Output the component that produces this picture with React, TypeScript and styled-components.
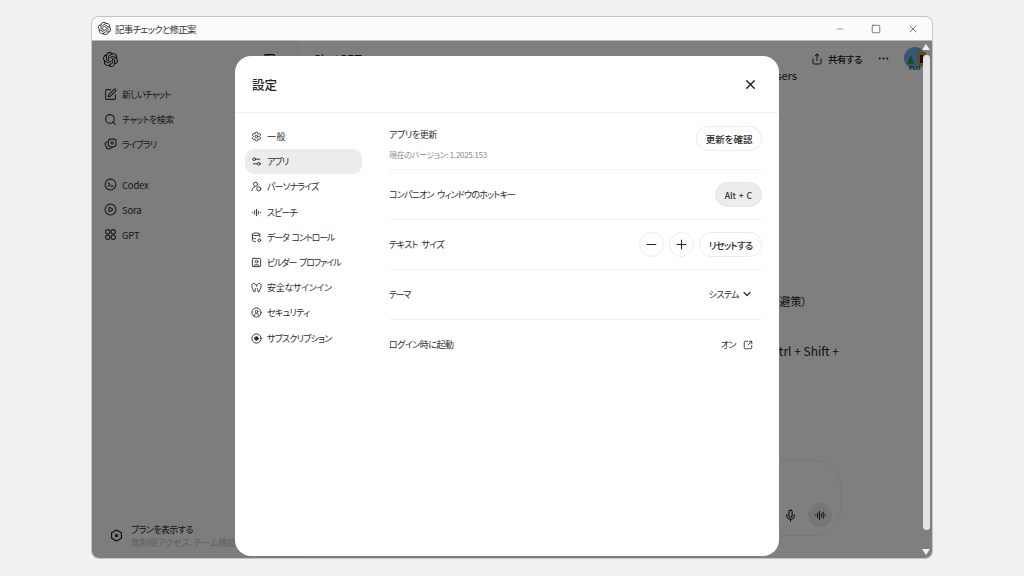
import React from 'react'
import styled, { createGlobalStyle } from 'styled-components'
import {
  AudioLines,
  ChevronDown,
  CirclePlay,
  Ellipsis,
  Minus,
  Mic,
  PanelLeft,
  Plus,
  Search,
  Settings,
  Settings2,
  Share,
  SquareArrowOutUpRight,
  SquarePen,
  SquareUser,
  Square,
  X,
} from 'lucide-react'
import { SiOpenai } from 'react-icons/si'

const Global = createGlobalStyle`
  html, body {
    margin: 0;
    height: 100%;
    background: #f1f1f1;
  }
  body {
    font-family: "Noto Sans CJK JP", "Open Sans", sans-serif;
    font-feature-settings: "palt";
    color: #222;
  }
`

const Page = styled.div`
  width: 1024px;
  height: 576px;
  padding: 17px 92px 18px;
  box-sizing: border-box;
  overflow: hidden;
`

const Win = styled.div`
  position: relative;
  height: 541px;
  display: flex;
  flex-direction: column;
  border-radius: 7px;
  overflow: hidden;
  box-shadow: 0 0 0 1px #c4c4c4;
  background: #fff;
`

const TitleBar = styled.div`
  height: 23px;
  flex: none;
  display: flex;
  align-items: center;
  padding: 0 13px 0 6px;
  background: #fbfbfb;
  border-bottom: 1px solid #bcbcbc;
`

const TitleText = styled.span`
  margin-left: 4px;
  flex: 1;
  font-size: 9.5px;
  letter-spacing: -0.75px;
  color: #333;
`

const WinButtons = styled.div`
  display: flex;
  align-items: center;
  gap: 26px;
  color: #444;
`

const Body = styled.div`
  position: relative;
  flex: 1;
  display: flex;
  overflow: hidden;
`

const Sidebar = styled.aside`
  width: 208px;
  flex: none;
  display: flex;
  flex-direction: column;
  padding: 9px 0 0 11px;
  box-sizing: border-box;
  background: #fafafa;
`

const LogoRow = styled.div`
  height: 18px;
  display: flex;
  align-items: center;
  justify-content: space-between;
  padding-right: 24px;
  margin-bottom: 14px;
  color: #111;
`

const SideItem = styled.div<{ $tight?: number }>`
  height: 25px;
  display: flex;
  align-items: center;
  gap: 5px;
  padding-left: 1px;
  font-size: 9px;
  letter-spacing: ${(p) => p.$tight ?? -0.9}px;
  color: #333;
`

const SideLatin = styled(SideItem)`
  font-size: 9.5px;
`

const SideGap = styled.div`
  height: 15px;
`

const PlanBox = styled.div`
  margin-top: auto;
  height: 49px;
  display: flex;
  align-items: flex-start;
  gap: 8px;
  padding: 14px 0 0 7px;
  box-sizing: border-box;
`

const PlanIconWrap = styled.div`
  margin-top: 6px;
  color: #111;
  display: flex;
`

const PlanTitle = styled.div`
  font-size: 9px;
  line-height: 13px;
  letter-spacing: -0.6px;
  color: #222;
`

const PlanSub = styled.div`
  font-size: 9px;
  line-height: 13px;
  letter-spacing: -0.2px;
  color: #c4c4c4;
  white-space: nowrap;
`

const Main = styled.main`
  flex: 1;
  display: flex;
  flex-direction: column;
  padding-right: 92px;
`

const TopBar = styled.div`
  height: 35px;
  flex: none;
  display: flex;
  align-items: center;
  padding: 0 0 0 13px;
`

const ModelName = styled.span`
  font-size: 12px;
  color: #222;
  display: flex;
  align-items: center;
  gap: 4px;
`

const TopRight = styled.div`
  margin-left: auto;
  margin-right: -86px;
  display: flex;
  align-items: center;
  color: #222;
`

const ShareBtn = styled.div`
  display: flex;
  align-items: center;
  gap: 5px;
  font-size: 9.5px;
  letter-spacing: -0.5px;
  font-weight: 500;
`

const More = styled.div`
  display: flex;
  margin: 0 14px 0 15px;
`

const Avatar = styled.div`
  position: relative;
  width: 22px;
  height: 22px;
  margin-top: -2px;
`

const AvatarLabel = styled.span`
  position: absolute;
  left: 5px;
  top: 17px;
  font: 600 6px "Open Sans", sans-serif;
  color: #333;
`

const Thread = styled.div`
  display: flex;
  flex-direction: column;
  text-align: right;
  white-space: nowrap;
  line-height: 16px;
  color: #222;
`

const ThreadLine = styled.div<{ $top: number; $right: number; $size: number }>`
  margin-top: ${(p) => p.$top}px;
  margin-right: ${(p) => p.$right}px;
  font-size: ${(p) => p.$size}px;
`

const Composer = styled.div`
  margin-top: auto;
  margin-bottom: 22px;
  margin-right: -1px;
  height: 76px;
  display: flex;
  align-items: flex-end;
  justify-content: flex-end;
  gap: 6px;
  padding: 0 8px 8px 0;
  box-sizing: border-box;
  border: 1px solid #f0f0f0;
  border-radius: 26px;
  background: #fff;
  color: #111;
`

const ComposerIcon = styled.div`
  width: 24px;
  height: 24px;
  display: flex;
  align-items: center;
  justify-content: center;
`

const VoiceBtn = styled(ComposerIcon)`
  border-radius: 50%;
  background: #ececec;
`

const Overlay = styled.div`
  position: absolute;
  inset: 0;
  display: flex;
  align-items: flex-start;
  justify-content: flex-start;
  padding: 15px 0 0 143px;
  box-sizing: border-box;
  background: rgba(0, 0, 0, 0.5);
`

const Modal = styled.div`
  width: 544px;
  height: 500px;
  display: flex;
  flex-direction: column;
  border-radius: 16px;
  background: #fff;
`

const ModalHead = styled.header`
  height: 57px;
  flex: none;
  display: flex;
  align-items: center;
  justify-content: space-between;
  padding: 0 21px 0 17px;
  box-sizing: border-box;
  border-bottom: 1px solid #f2f2f2;
`

const ModalTitle = styled.h2`
  margin: 0;
  font-size: 12.5px;
  font-weight: 500;
  color: #222;
`

const CloseBtn = styled.button`
  display: flex;
  padding: 0;
  border: 0;
  background: none;
  color: #111;
`

const ModalBody = styled.div`
  flex: 1;
  display: flex;
`

const Nav = styled.nav`
  width: 117px;
  flex: none;
  margin: 11px 0 0 10px;
  display: flex;
  flex-direction: column;
`

const NavItem = styled.div<{ $active?: boolean; $tight: number }>`
  height: 25.2px;
  display: flex;
  align-items: center;
  gap: 5px;
  padding-left: 6px;
  border-radius: 9px;
  font-size: 9px;
  letter-spacing: ${(p) => p.$tight}px;
  word-spacing: 2px;
  color: #2c2c2c;
  background: ${(p) => (p.$active ? '#ececec' : 'transparent')};
`

const Content = styled.section`
  width: 373px;
  margin: 8px 0 0 27px;
  display: flex;
  flex-direction: column;
`

const Row = styled.div<{ $last?: boolean }>`
  height: 50px;
  flex: none;
  display: flex;
  align-items: center;
  justify-content: space-between;
  box-sizing: border-box;
  border-bottom: ${(p) => (p.$last ? '0' : '1px solid #f2f2f2')};
`

const RowTall = styled(Row)`
  height: 49px;
  align-items: flex-start;
`

const RowLabel = styled.div<{ $tight: number }>`
  margin-top: -1px;
  font-size: 9px;
  letter-spacing: ${(p) => p.$tight}px;
  word-spacing: 2px;
  color: #2c2c2c;
`

const UpdateLabel = styled(RowLabel)`
  margin-top: 7px;
  line-height: 14px;
`

const VersionText = styled.div`
  margin-top: 7px;
  font-size: 8px;
  line-height: 12px;
  letter-spacing: -0.3px;
  color: #8a8a8a;
`

const Controls = styled.div`
  display: flex;
  align-items: center;
  gap: 5px;
`

const Pill = styled.button<{ $filled?: boolean; $tight?: number }>`
  height: 25px;
  padding: 0 ${(p) => (p.$filled ? 9 : 8.5)}px;
  border: 1px solid ${(p) => (p.$filled ? '#e3e3e3' : '#ececec')};
  border-radius: 13px;
  background: ${(p) => (p.$filled ? '#ececec' : '#fff')};
  color: #2a2a2a;
  font-family: inherit;
  font-feature-settings: inherit;
  font-size: ${(p) => (p.$filled ? 8.5 : 9.5)}px;
  word-spacing: ${(p) => (p.$filled ? 1 : 0)}px;
  letter-spacing: ${(p) => p.$tight ?? 0}px;
  font-weight: 500;
`

const UpdatePill = styled(Pill)`
  margin-top: 5px;
`

const RoundBtn = styled.button`
  width: 25px;
  height: 25px;
  padding: 0;
  display: flex;
  align-items: center;
  justify-content: center;
  border: 1px solid #ececec;
  border-radius: 50%;
  background: #fff;
  color: #222;
`

const ValueText = styled.div<{ $gap: number }>`
  display: flex;
  align-items: center;
  gap: ${(p) => p.$gap}px;
  padding-right: 9px;
  margin-top: -1px;
  font-size: 9px;
  letter-spacing: -0.6px;
  color: #2c2c2c;
`

const Scrollbar = styled.div`
  position: absolute;
  top: 0;
  bottom: 0;
  right: 2px;
  width: 8px;
  display: flex;
  flex-direction: column;
  align-items: center;
`

const Arrow = styled.div<{ $down?: boolean }>`
  flex: none;
  margin: ${(p) => (p.$down ? 'auto 0 3px' : '3px 0 0')};
  width: 0;
  height: 0;
  border-left: 4px solid transparent;
  border-right: 4px solid transparent;
  ${(p) => (p.$down ? 'border-top: 6px solid #f0f0f0;' : 'border-bottom: 6px solid #f0f0f0;')}
`

const Thumb = styled.div`
  width: 7px;
  height: 475px;
  margin-top: 5px;
  border-radius: 4px;
  background: #e4e4e4;
`

const Ico = ({ children, size = 11 }: { children: React.ReactNode; size?: number }) => (
  <svg
    width={size}
    height={size}
    viewBox="0 0 24 24"
    fill="none"
    stroke="currentColor"
    strokeWidth={2}
    strokeLinecap="round"
    strokeLinejoin="round"
  >
    {children}
  </svg>
)

const Person = () => (
  <Ico>
    <circle cx="10" cy="7" r="4.500" />
    <path d="M2 21c0-4 2-7 6-8" />
    <circle cx="17" cy="17" r="4.500" />
  </Ico>
)

const SpeechIcon = () => (
  <Ico>
    <path d="M12 5v14M8 8v8M16 9v6M3.500 11.500v1M20.500 11.500v1" />
  </Ico>
)

const DataIcon = () => (
  <Ico>
    <ellipse cx="11" cy="5" rx="8" ry="3" />
    <path d="M3 5v13c0 2 3 3 7 3M19 5v5M3 11.500c0 2 3 3 7 3" />
    <circle cx="18" cy="18" r="3" />
  </Ico>
)

const SignInIcon = () => (
  <Ico>
    <path d="M12 9c-1-4-3-6-6-6S2 6 2 9c0 5 3 7 4 12h3c0-4 1-5 1-7" />
    <path d="M12 9c1-4 3-6 6-6s4 3 4 6c0 5-3 7-4 12h-3c0-4-1-5-1-7" />
  </Ico>
)

const SecurityIcon = () => (
  <Ico>
    <circle cx="12" cy="12" r="10" />
    <circle cx="12" cy="10" r="3" />
    <path d="M6.500 19c1-3 3-4.500 5.500-4.500s4.500 1.500 5.500 4.500" />
  </Ico>
)

const SubIcon = () => (
  <Ico>
    <circle cx="12" cy="12" r="10" />
    <circle cx="12" cy="12" r="4" fill="currentColor" />
  </Ico>
)

const LibraryIcon = () => (
  <Ico size={13}>
    <rect x="8" y="2" width="14" height="14" rx="4" />
    <path d="M6 7.500 3.500 8.500a2.500 2.500 0 0 0-1.300 3.300l3 7a2.500 2.500 0 0 0 3.300 1.300l7-2.500" />
    <circle cx="15" cy="9" r="2" />
  </Ico>
)

const CodexIcon = () => (
  <Ico size={13}>
    <circle cx="12" cy="12" r="10" />
    <path d="m8 9 3 3-3 3M13 15h4" />
  </Ico>
)

const GptIcon = () => (
  <Ico size={13}>
    <circle cx="7" cy="7" r="4" />
    <circle cx="17" cy="7" r="4" />
    <circle cx="7" cy="17" r="4" />
    <circle cx="17" cy="17" r="4" />
  </Ico>
)

const PlanIcon = () => (
  <Ico size={13}>
    <path d="M12 2 21 7v10l-9 5-9-5V7z" />
    <circle cx="12" cy="12" r="2" fill="currentColor" />
  </Ico>
)

const AvatarArt = () => (
  <svg width="22" height="22" viewBox="0 0 22 22">
    <circle cx="11" cy="11" r="11" fill="#6fb0e8" />
    <path d="M14 5h8v14h-8z" fill="#d98b2b" />
    <path d="M16 8h3v8h-3z" fill="#222" />
    <path d="M3 17c2-6 3-8 4-8s2 3 3 8z" fill="#3a9a3a" />
  </svg>
)

const navItems = [
  { label: '一般', tight: 0.5, icon: <Settings size={11} /> },
  { label: 'アプリ', tight: -0.9, icon: <Settings2 size={11} />, active: true },
  { label: 'パーソナライズ', tight: -0.8, icon: <Person /> },
  { label: 'スピーチ', tight: -0.9, icon: <SpeechIcon /> },
  { label: 'データ コントロール', tight: -1.15, icon: <DataIcon /> },
  { label: 'ビルダー プロファイル', tight: -1.15, icon: <SquareUser size={11} /> },
  { label: '安全なサインイン', tight: -0.3, icon: <SignInIcon /> },
  { label: 'セキュリティ', tight: -0.7, icon: <SecurityIcon /> },
  { label: 'サブスクリプション', tight: -0.75, icon: <SubIcon /> },
]

export default function App() {
  return (
    <Page>
      <Global />
      <Win>
        <TitleBar>
          <SiOpenai size={13} color="#333" />
          <TitleText>記事チェックと修正案</TitleText>
          <WinButtons>
            <Minus size={10} strokeWidth={1.2} />
            <Square size={10} strokeWidth={1.6} />
            <X size={12} strokeWidth={1.4} />
          </WinButtons>
        </TitleBar>
        <Body>
          <Sidebar>
            <LogoRow>
              <SiOpenai size={15} />
              <PanelLeft size={13} />
            </LogoRow>
            <SideItem>
              <SquarePen size={13} />
              新しいチャット
            </SideItem>
            <SideItem $tight={-0.6}>
              <Search size={13} />
              チャットを検索
            </SideItem>
            <SideItem>
              <LibraryIcon />
              ライブラリ
            </SideItem>
            <SideGap />
            <SideLatin $tight={-0.2}>
              <CodexIcon />
              Codex
            </SideLatin>
            <SideLatin $tight={-0.2}>
              <CirclePlay size={13} />
              Sora
            </SideLatin>
            <SideLatin $tight={-0.2}>
              <GptIcon />
              GPT
            </SideLatin>
            <PlanBox>
              <PlanIconWrap>
                <PlanIcon />
              </PlanIconWrap>
              <div>
                <PlanTitle>プランを表示する</PlanTitle>
                <PlanSub>無制限アクセス、チーム機能など</PlanSub>
              </div>
            </PlanBox>
          </Sidebar>
          <Main>
            <TopBar>
              <ModelName>
                ChatGPT
                <ChevronDown size={10} />
              </ModelName>
              <TopRight>
                <ShareBtn>
                  <Share size={12} />
                  共有する
                </ShareBtn>
                <More>
                  <Ellipsis size={13} />
                </More>
                <Avatar>
                  <AvatarArt />
                  <AvatarLabel>PLU</AvatarLabel>
                </Avatar>
              </TopRight>
            </TopBar>
            <Thread>
              <ThreadLine $top={-9} $right={43} $size={11}>
                Power Users
              </ThreadLine>
              <ThreadLine $top={210} $right={33} $size={11}>
                回避策）
              </ThreadLine>
              <ThreadLine $top={34} $right={1} $size={12}>
                Ctrl + Shift +
              </ThreadLine>
            </Thread>
            <Composer>
              <ComposerIcon>
                <Mic size={13} />
              </ComposerIcon>
              <VoiceBtn>
                <AudioLines size={11} />
              </VoiceBtn>
            </Composer>
          </Main>
          <Overlay>
            <Modal>
              <ModalHead>
                <ModalTitle>設定</ModalTitle>
                <CloseBtn>
                  <X size={15} />
                </CloseBtn>
              </ModalHead>
              <ModalBody>
                <Nav>
                  {navItems.map((item) => (
                    <NavItem key={item.label} $active={item.active} $tight={item.tight}>
                      {item.icon}
                      {item.label}
                    </NavItem>
                  ))}
                </Nav>
                <Content>
                  <RowTall>
                    <div>
                      <UpdateLabel $tight={-0.4}>アプリを更新</UpdateLabel>
                      <VersionText>現在のバージョン: 1.2025.153</VersionText>
                    </div>
                    <UpdatePill>更新を確認</UpdatePill>
                  </RowTall>
                  <Row>
                    <RowLabel $tight={-0.8}>コンパニオン ウィンドウのホットキー</RowLabel>
                    <Pill $filled>Alt + C</Pill>
                  </Row>
                  <Row>
                    <RowLabel $tight={-0.6}>テキスト サイズ</RowLabel>
                    <Controls>
                      <RoundBtn>
                        <Minus size={15} strokeWidth={1.6} />
                      </RoundBtn>
                      <RoundBtn>
                        <Plus size={15} strokeWidth={1.6} />
                      </RoundBtn>
                      <Pill $tight={-0.8}>リセットする</Pill>
                    </Controls>
                  </Row>
                  <Row>
                    <RowLabel $tight={-1.4}>テーマ</RowLabel>
                    <ValueText $gap={2}>
                      システム
                      <ChevronDown size={12} strokeWidth={2.4} />
                    </ValueText>
                  </Row>
                  <Row $last>
                    <RowLabel $tight={-0.5}>ログイン時に起動</RowLabel>
                    <ValueText $gap={7}>
                      オン
                      <SquareArrowOutUpRight size={10} />
                    </ValueText>
                  </Row>
                </Content>
              </ModalBody>
            </Modal>
          </Overlay>
          <Scrollbar>
            <Arrow />
            <Thumb />
            <Arrow $down />
          </Scrollbar>
        </Body>
      </Win>
    </Page>
  )
}
